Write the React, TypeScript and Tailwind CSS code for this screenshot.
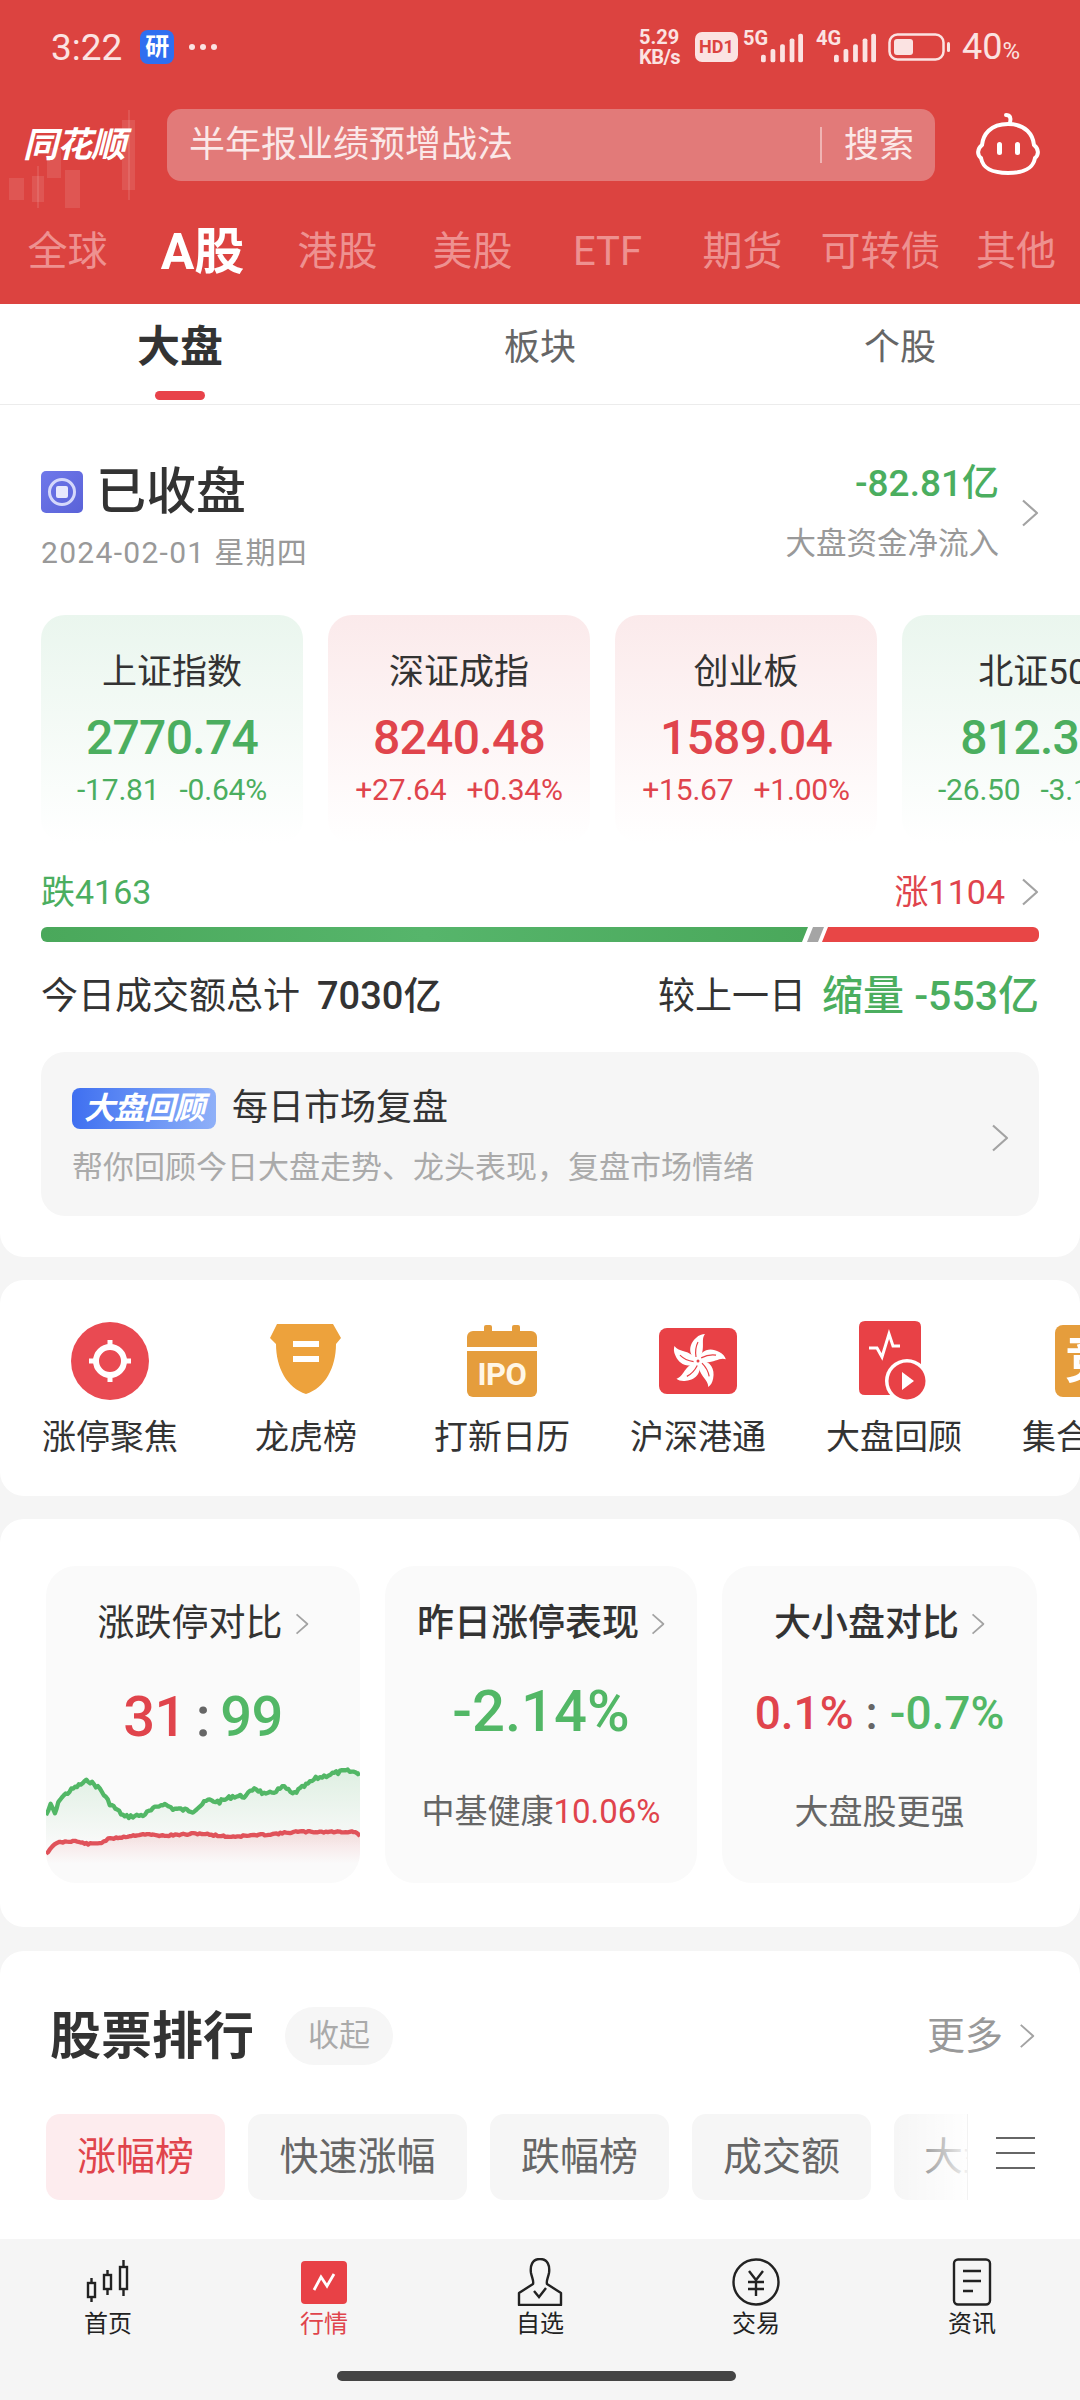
import React from "react";

const Chevron = ({ className = "" }: { className?: string }) => (
  <svg viewBox="0 0 18 28" className={className} fill="none" stroke="#a3a3a3" strokeWidth="2.2">
    <path d="M2 1.5 L16 14 L2 26.5" strokeLinejoin="round" />
  </svg>
);

function jitter(points: number[][], amp: number, seed: number) {
  let s = seed;
  const rnd = () => {
    s = (s * 9301 + 49297) % 233280;
    return s / 233280 - 0.5;
  };
  const out: number[][] = [];
  for (let i = 0; i < points.length - 1; i++) {
    const [x0, y0] = points[i];
    const [x1, y1] = points[i + 1];
    const n = Math.max(2, Math.round((x1 - x0) / 6));
    for (let k = 0; k < n; k++) {
      const t = k / n;
      out.push([x0 + (x1 - x0) * t, y0 + (y1 - y0) * t + rnd() * amp]);
    }
  }
  out.push(points[points.length - 1]);
  return out;
}
const toPath = (p: number[][]) => p.map((q, i) => `${i ? "L" : "M"}${q[0].toFixed(1)} ${q[1].toFixed(1)}`).join(" ");

const greenPts = jitter(
  [[48,375],[62,345],[75,370],[90,325],[130,295],[175,270],[210,295],[240,340],[285,380],[340,375],[400,340],[430,355],[490,362],[535,330],[570,335],[610,318],[650,318],[675,292],[710,315],[765,290],[790,312],[860,265],[910,250],[950,242],[993,248]],
  11, 7);
const redPts = jitter(
  [[48,490],[80,458],[130,452],[175,462],[215,458],[235,447],[340,432],[400,437],[510,430],[600,440],[730,432],[800,425],[980,425],[993,438]],
  5, 11);

const ChartSvg = () => (
  <svg viewBox="48 230 945 340" preserveAspectRatio="none" className="block w-full h-[113px]">
    <defs>
      <linearGradient id="gf" x1="0" y1="0" x2="0" y2="1">
        <stop offset="0" stopColor="#4fb765" stopOpacity="0.16" />
        <stop offset="1" stopColor="#4fb765" stopOpacity="0" />
      </linearGradient>
      <linearGradient id="rf" x1="0" y1="0" x2="0" y2="1">
        <stop offset="0" stopColor="#e0444c" stopOpacity="0.16" />
        <stop offset="1" stopColor="#e0444c" stopOpacity="0" />
      </linearGradient>
    </defs>
    <path d={`${toPath(greenPts)} L993 470 L48 470 Z`} fill="url(#gf)" />
    <path d={toPath(greenPts)} fill="none" stroke="#52b766" strokeWidth="13" strokeLinejoin="round" />
    <path d={`${toPath(redPts)} L993 520 L48 520 Z`} fill="url(#rf)" />
    <path d={toPath(redPts)} fill="none" stroke="#e0525a" strokeWidth="13" strokeLinejoin="round" />
  </svg>
);

const Signal = ({ className = "" }: { className?: string }) => (
  <svg viewBox="0 0 44 30" className={className} fill="#fbe3e2">
    <rect x="0" y="22" width="5" height="8" rx="2" />
    <rect x="10" y="16" width="5" height="14" rx="2" />
    <rect x="20" y="11" width="5" height="19" rx="2" />
    <rect x="30" y="5" width="5" height="25" rx="2" />
    <rect x="39" y="0" width="5" height="30" rx="2" />
  </svg>
);

const StatusBar = () => (
  <div className="h-[94px] flex items-center pl-[51px] text-[#fbe3e2] relative">
    <span className="text-[37px] leading-none">3:22</span>
    <span className="ml-[18px] w-[34px] h-[34px] rounded-[8px] bg-[#2f6ff0] text-white text-[24px] font-bold flex items-center justify-center leading-none">研</span>
    <span className="ml-[15px] flex gap-[5px]">
      <i className="block w-[6px] h-[6px] rounded-full bg-[#fbe3e2]" />
      <i className="block w-[6px] h-[6px] rounded-full bg-[#fbe3e2]" />
      <i className="block w-[6px] h-[6px] rounded-full bg-[#fbe3e2]" />
    </span>
    <div className="ml-auto flex items-center pr-[60px]">
      <div className="flex flex-col text-[20px] font-bold leading-[20px] mr-[6px] w-[50px]">
        <span>5.29</span>
        <span className="tracking-[-0.5px]">KB/s</span>
      </div>
      <span className="w-[43px] h-[30px] rounded-[7px] bg-[#fbe3e2] text-[#dc4340] text-[18px] font-bold flex items-center justify-center leading-none">HD1</span>
      <div className="relative w-[60px] h-[32px] ml-[5px]">
        <span className="absolute left-[0px] -top-[3px] text-[20px] font-bold leading-none">5G</span>
        <Signal className="absolute right-0 bottom-0 w-[42px] h-[30px]" />
      </div>
      <div className="relative w-[60px] h-[32px] ml-[13px]">
        <span className="absolute left-[0px] -top-[3px] text-[20px] font-bold leading-none">4G</span>
        <Signal className="absolute right-0 bottom-0 w-[42px] h-[30px]" />
      </div>
      <svg viewBox="0 0 62 28" className="w-[62px] h-[28px] ml-[12px]" fill="none">
        <rect x="1.5" y="1.5" width="54" height="25" rx="8" stroke="#fbe3e2" strokeWidth="2.5" />
        <rect x="6" y="6" width="19" height="16" rx="3" fill="#fbe3e2" />
        <rect x="59" y="9" width="3" height="10" rx="1.5" fill="#fbe3e2" />
      </svg>
      <span className="ml-[12px] text-[36px] leading-none">40<span className="text-[24px]">%</span></span>
    </div>
  </div>
);

const SearchRow = () => (
  <div className="h-[102px] flex items-center pl-[23px] relative">
    <svg viewBox="0 0 140 110" className="absolute left-0 top-[4px] w-[140px] h-[110px]" fill="#ffffff" fillOpacity="0.1">
      <rect x="9" y="80" width="15" height="22" />
      <rect x="32" y="78" width="12" height="26" />
      <rect x="37" y="68" width="2" height="42" />
      <rect x="65" y="72" width="15" height="40" />
      <rect x="47" y="50" width="14" height="30" />
      <rect x="122" y="22" width="13" height="70" />
      <rect x="128" y="12" width="2" height="90" />
    </svg>
    <span className="relative w-[144px] text-white text-[35px] font-bold italic leading-none tracking-[-1px]">同花顺</span>
    <div className="w-[768px] h-[72px] rounded-[14px] bg-[#e27a79] flex items-center pl-[22px] pr-[21px] text-[#fbe8e8]">
      <span className="text-[36px] leading-none">半年报业绩预增战法</span>
      <span className="ml-auto w-[2px] h-[36px] bg-[#f0b4b3] mr-[22px]" />
      <span className="text-[35px] leading-none">搜索</span>
    </div>
    <svg viewBox="0 0 64 64" className="ml-[41px] w-[64px] h-[64px]" fill="none" stroke="#fff" strokeWidth="4">
      <path d="M30 2 Q36 2 34 10" strokeLinecap="round" />
      <path d="M32 11 C14 11 7 22 6 32 C1 36 1 42 5 45 C7 56 16 60 32 60 C48 60 57 56 59 45 C63 42 63 36 58 32 C57 22 50 11 32 11 Z" />
      <rect x="21" y="29" width="5" height="13" rx="2.5" fill="#fff" stroke="none" />
      <rect x="39" y="29" width="5" height="13" rx="2.5" fill="#fff" stroke="none" />
    </svg>
  </div>
);

const MarketTabs = () => (
  <div className="h-[108px] flex items-center pt-[4px] text-[40px] text-[#ee9190] leading-none">
    <span className="w-[135px] text-center">全球</span>
    <span className="w-[135px] text-center text-white text-[50px] font-bold">A股</span>
    <span className="w-[135px] text-center">港股</span>
    <span className="w-[135px] text-center">美股</span>
    <span className="w-[135px] text-center">ETF</span>
    <span className="w-[135px] text-center">期货</span>
    <span className="w-[135px] text-center ml-[3px]">可转债</span>
    <span className="w-[128px] text-center ml-[4px]">其他</span>
  </div>
);

const SubTabs = () => (
  <div className="h-[101px] grid grid-cols-3 bg-white border-b border-[#ececec]">
    <div className="flex flex-col items-center">
      <span className="h-[87px] flex items-center text-[43px] font-bold text-[#333]">大盘</span>
      <i className="block w-[50px] h-[9px] rounded-full bg-[#e8424a]" />
    </div>
    <div className="flex flex-col items-center">
      <span className="h-[87px] flex items-center text-[36px] text-[#666]">板块</span>
    </div>
    <div className="flex flex-col items-center">
      <span className="h-[87px] flex items-center text-[36px] text-[#666]">个股</span>
    </div>
  </div>
);

type Idx = { t: string; v: string; a: string; b: string; up: boolean };
const indices: Idx[] = [
  { t: "上证指数", v: "2770.74", a: "-17.81", b: "-0.64%", up: false },
  { t: "深证成指", v: "8240.48", a: "+27.64", b: "+0.34%", up: true },
  { t: "创业板", v: "1589.04", a: "+15.67", b: "+1.00%", up: true },
  { t: "北证50", v: "812.37", a: "-26.50", b: "-3.16%", up: false },
];

const IndexCard = ({ d }: { d: Idx }) => (
  <div className={`w-[262px] h-[228px] shrink-0 rounded-[24px] pt-[40px] flex flex-col items-center bg-gradient-to-b to-white ${d.up ? "from-[#fbeaeb]" : "from-[#eaf6ee]"}`}>
    <span className="h-[36px] text-[35px] leading-[36px] text-[#333]">{d.t}</span>
    <span className={`h-[56px] mt-[19px] text-[48px] tracking-[-0.7px] font-medium leading-[56px] ${d.up ? "text-[#e0444c]" : "text-[#4bae5f]"}`}>{d.v}</span>
    <span className={`h-[34px] mt-[7px] text-[30px] tracking-[-0.2px] leading-[34px] flex gap-[20px] whitespace-nowrap ${d.up ? "text-[#e0444c]" : "text-[#4bae5f]"}`}>
      <span>{d.a}</span>
      <span>{d.b}</span>
    </span>
  </div>
);

const MarketSection = () => (
  <div className="bg-white rounded-b-[24px] px-[41px] pb-[41px] overflow-hidden shrink-0">
    <div className="h-[210px] pt-[57px] flex justify-between">
      <div>
        <div className="flex items-center h-[60px]">
          <span className="w-[42px] h-[42px] rounded-[5px] bg-gradient-to-br from-[#6f78ea] to-[#5a62d8] flex items-center justify-center">
            <span className="w-[28px] h-[28px] rounded-full border-[3px] border-[#d5d8fb] flex items-center justify-center">
              <i className="block w-[12px] h-[12px] rounded-[2px] bg-[#e8e9fd]" />
            </span>
          </span>
          <span className="ml-[13px] text-[50px] font-medium text-[#333] leading-none">已收盘</span>
        </div>
        <div className="mt-[11px] h-[40px] text-[30px] tracking-[1.3px] leading-[40px] text-[#999]">2024-02-01 星期四</div>
      </div>
      <div className="flex items-center h-[102px]">
        <div className="flex flex-col items-end">
          <span className="h-[44px] text-[37px] leading-[44px] text-[#4bae5f] font-medium">-82.81亿</span>
          <span className="mt-[18px] h-[40px] text-[30.5px] leading-[40px] text-[#999]">大盘资金净流入</span>
        </div>
        <Chevron className="w-[18px] h-[28px] ml-[22px]" />
      </div>
    </div>
    <div className="flex gap-[25px]">
      {indices.map((d) => (
        <IndexCard key={d.t} d={d} />
      ))}
    </div>
    <div className="mt-[29px] h-[40px] flex items-center justify-between text-[34px] leading-none">
      <span className="text-[#4bae5f]">跌4163</span>
      <span className="flex items-center text-[#e0444c]">
        涨1104
        <Chevron className="w-[18px] h-[28px] ml-[16px]" />
      </span>
    </div>
    <div className="mt-[15px] h-[15px] flex rounded-[6px] overflow-hidden w-[998px]">
      <div className="w-[767px] bg-gradient-to-r from-[#4aa85b] via-[#56b56b] to-[#4aa85b] [clip-path:polygon(0_0,100%_0,calc(100%-6px)_100%,0_100%)]" />
      <div className="w-[17px] -ml-[1px] bg-[#a5a5a5] [clip-path:polygon(6px_0,100%_0,calc(100%-6px)_100%,0_100%)]" />
      <div className="flex-1 -ml-[2px] bg-[#e84646] [clip-path:polygon(6px_0,100%_0,100%_100%,0_100%)]" />
    </div>
    <div className="mt-[31px] h-[46px] flex items-center justify-between text-[37px] leading-none text-[#333]">
      <span className="flex items-center">今日成交额总计<span className="ml-[17px] font-medium text-[38px]">7030亿</span></span>
      <span className="flex items-center">
        较上一日
        <span className="ml-[16px] text-[#4bae5f] text-[41px] font-medium">缩量 -553亿</span>
      </span>
    </div>
    <div className="mt-[33px] h-[164px] w-[998px] rounded-[24px] bg-[#f6f6f6] pl-[31px] pr-[30px] pt-[8px] flex items-center">
      <div className="flex-1">
        <div className="flex items-center h-[42px]">
          <span className="w-[144px] h-[41px] rounded-[8px] bg-gradient-to-r from-[#3f6ff0] to-[#8fb0f8] text-white italic font-bold text-[31px] leading-none flex items-center justify-center tracking-[-1px]">大盘回顾</span>
          <span className="ml-[16px] text-[36px] leading-none text-[#333]">每日市场复盘</span>
        </div>
        <div className="mt-[18px] text-[31px] leading-[42px] text-[#aaa] whitespace-nowrap">帮你回顾今日大盘走势、龙头表现，复盘市场情绪</div>
      </div>
      <Chevron className="w-[18px] h-[28px]" />
    </div>
  </div>
);

const IconTarget = () => (
  <svg viewBox="0 0 78 78" className="w-[78px] h-[78px]">
    <circle cx="39" cy="39" r="39" fill="#e94a52" />
    <circle cx="39" cy="39" r="14" fill="none" stroke="#fff" strokeWidth="6" />
    <path d="M39 18V26M39 52V60M18 39H26M52 39H60" stroke="#fff" strokeWidth="5" />
  </svg>
);
const IconShield = () => (
  <svg viewBox="0 0 78 78" className="w-[78px] h-[78px]">
    <path d="M10 2 H66 L74 16 L69 22 C69 46 58 66 39 72 C20 66 9 46 9 22 L3 16 Z" fill="#eda23c" />
    <rect x="26" y="19" width="26" height="6" fill="#fff" />
    <rect x="26" y="34" width="26" height="6" fill="#fff" />
  </svg>
);
const IconCalendar = () => (
  <div className="w-[70px] h-[72px] flex flex-col">
    <div className="h-[16px] flex justify-center gap-[20px]">
      <i className="block w-[8px] h-[6px] bg-[#e59d3c] rounded-t-[2px]" />
      <i className="block w-[8px] h-[6px] bg-[#e59d3c] rounded-t-[2px]" />
    </div>
    <i className="block -mt-[10px] h-[16px] bg-[#e59d3c] rounded-t-[6px]" />
    <div className="mt-[4px] flex-1 bg-[#e59d3c] rounded-b-[6px] text-[#fff6e6] font-bold text-[31px] leading-none flex items-center justify-center tracking-[-0.5px]">IPO</div>
  </div>
);
const IconHK = () => (
  <svg viewBox="0 0 78 66" className="w-[78px] h-[66px]">
    <rect width="78" height="66" rx="8" fill="#e84146" />
    {[0, 72, 144, 216, 288].map((a) => (
      <g key={a} transform={`rotate(${a} 39 33)`}>
        <path d="M39 33 C29 28 29 17 37 10 C40 7 43 6 46 6 C41 12 48 21 39 33 Z" fill="#fff" />
        <path d="M37 29 C36 23 37 18 39 14" stroke="#e84146" strokeWidth="1.2" fill="none" />
      </g>
    ))}
    <circle cx="39" cy="33" r="1.5" fill="#e84146" />
  </svg>
);
const IconReview = () => (
  <svg viewBox="0 0 70 82" className="w-[70px] h-[82px] mt-[2px]">
    <path d="M6 0H56Q62 0 62 6V74H6Q0 74 0 68V6Q0 0 6 0Z" fill="#e84146" />
    <path d="M10 27H18L23 36L30 13L34 25H41" stroke="#fff" strokeWidth="3" fill="none" />
    <circle cx="48" cy="60" r="22" fill="#fff" />
    <circle cx="48" cy="60" r="18.5" fill="#e84146" />
    <path d="M43 51L55 60L43 69Z" fill="#fff" />
  </svg>
);

const tools: { label: string; icon: React.ReactNode }[] = [
  { label: "涨停聚焦", icon: <IconTarget /> },
  { label: "龙虎榜", icon: <IconShield /> },
  { label: "打新日历", icon: <IconCalendar /> },
  { label: "沪深港通", icon: <IconHK /> },
  { label: "大盘回顾", icon: <IconReview /> },
  { label: "集合竞价", icon: <div className="w-[70px] h-[72px] rounded-[8px] bg-[#e59d3c] text-white text-[50px] font-bold leading-none flex items-center justify-center">竞</div> },
];

const ToolsSection = () => (
  <div className="mt-[23px] h-[216px] shrink-0 bg-white rounded-[24px] pt-[41px] pl-[12px] flex overflow-hidden">
    {tools.map((t) => (
      <div key={t.label} className="w-[196px] shrink-0 flex flex-col items-center">
        <div className="h-[80px] flex items-center justify-center">{t.icon}</div>
        <span className="mt-[16px] h-[40px] text-[34px] leading-[40px] text-[#333] whitespace-nowrap">{t.label}</span>
      </div>
    ))}
  </div>
);

const StatTitle = ({ children, bold }: { children: React.ReactNode; bold?: boolean }) => (
  <div className="mt-[38px] h-[40px] flex items-center justify-center">
    <span className={`text-[37px] leading-[40px] text-[#333] ${bold ? "font-medium" : ""}`}>{children}</span>
    <Chevron className="w-[14px] h-[24px] ml-[12px]" />
  </div>
);

const StatsSection = () => (
  <div className="mt-[23px] shrink-0 bg-white rounded-[24px] pt-[47px] pb-[44px] pl-[46px] pr-[44px] grid grid-cols-[314px_312px_315px] gap-[25px]">
    <div className="h-[317px] rounded-[30px] bg-[#fafafa] overflow-hidden flex flex-col">
      <StatTitle>涨跌停对比</StatTitle>
      <div className="mt-[38px] h-[70px] flex items-center justify-center text-[56px] tracking-[-0.5px] font-medium leading-none">
        <span className="text-[#e0444c]">31</span>
        <span className="mx-[10px] text-[#666]">:</span>
        <span className="text-[#52b766]">99</span>
      </div>
      <div className="mt-auto mb-[3px]"><ChartSvg /></div>
    </div>
    <div className="h-[317px] rounded-[30px] bg-[#fafafa] flex flex-col items-center">
      <StatTitle bold>昨日涨停表现</StatTitle>
      <div className="mt-[31px] h-[72px] text-[58px] leading-[72px] font-medium text-[#52b766]">-2.14%</div>
      <div className="mt-[41px] h-[48px] text-[33px] leading-[48px] text-[#666]">中基健康<span className="text-[#e0444c]">10.06%</span></div>
    </div>
    <div className="h-[317px] rounded-[30px] bg-[#fafafa] flex flex-col items-center">
      <StatTitle bold>大小盘对比</StatTitle>
      <div className="mt-[33px] h-[72px] text-[46px] leading-[72px] font-medium flex items-center whitespace-nowrap">
        <span className="text-[#e0444c]">0.1%</span>
        <span className="mx-[12px] text-[#666]">:</span>
        <span className="text-[#52b766]">-0.7%</span>
      </div>
      <div className="mt-[39px] h-[48px] text-[34px] leading-[48px] text-[#666]">大盘股更强</div>
    </div>
  </div>
);

const RankSection = () => (
  <div className="mt-[24px] flex-1 min-h-0 bg-white rounded-t-[24px] pt-[56px] pl-[46px] pr-[45px] relative overflow-hidden">
    <div className="h-[58px] flex items-center">
      <span className="ml-[4px] text-[51px] font-bold leading-none text-[#333]">股票排行</span>
      <span className="ml-[31px] w-[108px] h-[58px] rounded-full bg-[#f6f6f6] text-[#aaa] text-[31px] flex items-center justify-center">收起</span>
      <span className="ml-auto text-[38px] text-[#999] leading-none">更多</span>
      <Chevron className="w-[16px] h-[28px] ml-[16px]" />
    </div>
    <div className="mt-[49px] flex gap-[23px] text-[39px] leading-none">
      <span className="w-[179px] h-[86px] shrink-0 rounded-[14px] bg-[#fdecee] text-[#e0444c] flex items-center justify-center">涨幅榜</span>
      <span className="w-[219px] h-[86px] shrink-0 rounded-[14px] bg-[#f6f6f6] text-[#666] flex items-center justify-center">快速涨幅</span>
      <span className="w-[179px] h-[86px] shrink-0 rounded-[14px] bg-[#f6f6f6] text-[#666] flex items-center justify-center">跌幅榜</span>
      <span className="w-[179px] h-[86px] shrink-0 rounded-[14px] bg-[#f6f6f6] text-[#666] flex items-center justify-center">成交额</span>
      <span className="w-[179px] h-[86px] shrink-0 rounded-[14px] bg-[#f6f6f6] text-[#666] flex items-center pl-[30px] whitespace-nowrap">大盘股</span>
    </div>
    <div className="absolute right-0 top-[163px] w-[186px] h-[86px] flex">
      <div className="w-[73px] bg-gradient-to-r from-transparent to-white/90" />
      <div className="flex-1 bg-white border-l border-[#f2f2f2] pl-[28px] pr-[45px] pt-[23px]">
        <div className="h-[32px] flex flex-col justify-between">
          <i className="block h-[2px] bg-[#666]" />
          <i className="block h-[2px] bg-[#666]" />
          <i className="block h-[2px] bg-[#666]" />
        </div>
      </div>
    </div>
  </div>
);

const NavHome = () => (
  <svg viewBox="0 0 48 48" className="w-[48px] h-[48px]" fill="none" stroke="#222" strokeWidth="2.4">
    <rect x="4" y="25" width="7" height="14" />
    <path d="M7.5 20V25M7.5 39V44" />
    <rect x="20" y="17" width="7" height="14" />
    <path d="M23.5 12V17M23.5 31V37" />
    <rect x="36" y="9" width="7" height="22" />
    <path d="M39.5 2V9M39.5 31V38" />
  </svg>
);
const NavMarket = () => (
  <svg viewBox="0 0 48 48" className="w-[48px] h-[48px]">
    <rect x="1" y="3" width="46" height="43" rx="4" fill="#e84146" />
    <path d="M14 32L21 19L27 28L34 16" stroke="#fff" strokeWidth="2.8" fill="none" />
  </svg>
);
const NavWatch = () => (
  <svg viewBox="0 0 48 48" className="w-[48px] h-[48px]" fill="none" stroke="#222" strokeWidth="2.4">
    <path d="M24 1C16 1 14 8 15 15C16 20 18 23 17 26L3 35V47H45V35L31 26C30 23 32 20 33 15C34 8 32 1 24 1Z" strokeLinejoin="round" />
    <path d="M18 33L23 39L30 30" />
  </svg>
);
const NavTrade = () => (
  <svg viewBox="0 0 48 48" className="w-[48px] h-[48px]" fill="none" stroke="#222" strokeWidth="2.4">
    <circle cx="24" cy="24" r="22.5" />
    <path d="M17 13L24 22L31 13M16 24H32M16 31H32M24 22V38" />
  </svg>
);
const NavNews = () => (
  <svg viewBox="0 0 48 48" className="w-[48px] h-[48px]" fill="none" stroke="#222" strokeWidth="2.4">
    <rect x="6" y="1.5" width="36" height="45" rx="4" />
    <path d="M15 13H33M15 23H33M15 33H25" strokeWidth="2.6" />
  </svg>
);

const navs = [
  { label: "首页", icon: <NavHome />, active: false },
  { label: "行情", icon: <NavMarket />, active: true },
  { label: "自选", icon: <NavWatch />, active: false },
  { label: "交易", icon: <NavTrade />, active: false },
  { label: "资讯", icon: <NavNews />, active: false },
];

const BottomNav = () => (
  <div className="h-[161px] shrink-0 bg-[#f5f5f5] flex flex-col">
    <div className="grid grid-cols-5 pt-[19px]">
      {navs.map((n) => (
        <div key={n.label} className="flex flex-col items-center">
          {n.icon}
          <span className={`mt-[3px] text-[24px] leading-[30px] ${n.active ? "text-[#e0444c]" : "text-[#222]"}`}>{n.label}</span>
        </div>
      ))}
    </div>
    <div className="mt-[32px] ml-[337px] w-[399px] h-[10px] rounded-full bg-[#444]" />
  </div>
);

export default function App() {
  return (
    <div className="w-[1080px] h-[2400px] overflow-hidden bg-[#f5f5f5] flex flex-col font-[Roboto,'Noto_Sans_CJK_SC',sans-serif]">
      <div className="bg-[#dc4340] shrink-0 h-[304px]">
        <StatusBar />
        <SearchRow />
        <MarketTabs />
      </div>
      <SubTabs />
      <MarketSection />
      <ToolsSection />
      <StatsSection />
      <RankSection />
      <BottomNav />
    </div>
  );
}
